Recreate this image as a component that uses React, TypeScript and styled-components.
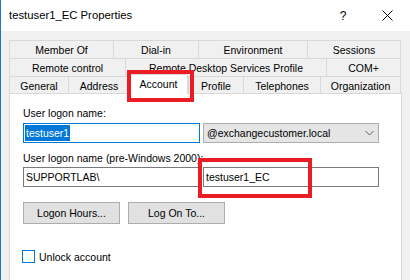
import styled, { createGlobalStyle } from "styled-components";

const GlobalStyle = createGlobalStyle`
  html, body {
    margin: 0;
    padding: 0;
    background: #ffffff;
  }
  * {
    box-sizing: border-box;
  }
`;

const Window = styled.div`
  position: relative;
  width: 410px;
  height: 280px;
  overflow: hidden;
  background: #f0f0f0;
  border-left: 1px solid #1979ca;
  font-family: "Liberation Sans", Arial, sans-serif;
  font-size: 10.5px;
  color: #000;
`;

const TitleBar = styled.div`
  display: flex;
  align-items: center;
  height: 31px;
  padding-left: 8px;
  padding-right: 13px;
  background: #ffffff;
`;

const Title = styled.div`
  flex: 1;
  font-size: 11.3px;
  padding-bottom: 1px;
`;

const TitleButton = styled.div<{ $mr?: number }>`
  width: 20px;
  margin-right: ${(p) => p.$mr ?? 0}px;
  display: flex;
  justify-content: center;
  align-items: center;
  font-size: 12px;
  color: #000;
`;

const Body = styled.div`
  padding: 9px 0 0 8px;
`;

const TabRow = styled.div<{ $h: number }>`
  display: flex;
  height: ${(p) => p.$h}px;
  margin-top: -1px;
  &:first-child {
    margin-top: 0;
  }
`;

const Tab = styled.div<{ $w: number; $last?: boolean; $front?: boolean; $selected?: boolean }>`
  width: ${(p) => p.$w + (p.$last ? 1 : 0)}px;
  display: flex;
  justify-content: center;
  align-items: center;
  border-top: 1px solid #d9d9d9;
  border-left: 1px solid #d9d9d9;
  border-right: ${(p) => (p.$last ? "1px solid #d9d9d9" : "none")};
  border-bottom: ${(p) => (p.$front ? "none" : "1px solid #d9d9d9")};
  background: ${(p) => (p.$selected ? "#ffffff" : "#f0f0f0")};
  white-space: nowrap;
  padding-top: 1px;
  ${(p) =>
    p.$selected &&
    `
    margin-top: -2px;
    height: calc(100% + 3px);
    position: relative;
    z-index: 1;
    border-right: 1px solid #d9d9d9;
    padding-bottom: 3px;
  `}
`;

const Panel = styled.div`
  width: 393px;
  height: 200px;
  background: #ffffff;
  border: 1px solid #d9d9d9;
  padding: 13px 0 0 13px;
  display: flex;
  flex-direction: column;
`;

const Label = styled.div<{ $mt?: number }>`
  line-height: 13px;
  height: 13px;
  margin-top: ${(p) => p.$mt ?? 0}px;
  white-space: nowrap;
`;

const FieldGrid = styled.div<{ $mt: number }>`
  display: grid;
  grid-template-columns: 177px 176px;
  column-gap: 3px;
  margin-top: ${(p) => p.$mt}px;
`;

const TextBox = styled.div<{ $focused?: boolean }>`
  height: 20px;
  border: 1px solid ${(p) => (p.$focused ? "#0078d7" : "#7a7a7a")};
  background: #ffffff;
  display: flex;
  align-items: center;
  padding-left: 1px;
  white-space: nowrap;
`;

const Selected = styled.span`
  background: #0078d7;
  color: #ffffff;
  line-height: 16px;
  padding: 0 1px;
`;

const Plain = styled.span`
  padding-left: 1px;
`;

const Combo = styled.div`
  height: 20px;
  border: 1px solid #adadad;
  background: #e5e5e5;
  display: flex;
  align-items: center;
  justify-content: space-between;
  padding: 0 4px 0 3px;
  white-space: nowrap;
`;

const ButtonRow = styled.div`
  display: flex;
  gap: 8px;
  margin-top: 15px;
`;

const Button = styled.div`
  width: 97px;
  height: 22px;
  background: #e1e1e1;
  border: 1px solid #adadad;
  display: flex;
  justify-content: center;
  align-items: center;
`;

const CheckRow = styled.div`
  display: flex;
  align-items: center;
  gap: 4px;
  margin-top: 26px;
  margin-left: -1px;
`;

const CheckBox = styled.div`
  width: 13px;
  height: 13px;
  border: 1px solid #0078d7;
  background: #ffffff;
`;

const Highlight = styled.div<{ $x: number; $y: number; $w: number; $h: number }>`
  position: absolute;
  left: ${(p) => p.$x}px;
  top: ${(p) => p.$y}px;
  width: ${(p) => p.$w}px;
  height: ${(p) => p.$h}px;
  border: 4px solid #ec1c24;
  pointer-events: none;
  z-index: 5;
`;

const rows = [
  { h: 19, tabs: [["Member Of", 104], ["Dial-in", 85], ["Environment", 109], ["Sessions", 93]] },
  { h: 19, tabs: [["Remote control", 116], ["Remote Desktop Services Profile", 201], ["COM+", 74]] },
  {
    h: 17,
    front: true,
    tabs: [["General", 59], ["Address", 61], ["Account", 59], ["Profile", 55], ["Telephones", 77], ["Organization", 80]],
  },
] as const;

export default function App() {
  return (
    <>
      <GlobalStyle />
      <Window>
        <TitleBar>
          <Title>testuser1_EC Properties</Title>
          <TitleButton $mr={24}>?</TitleButton>
          <TitleButton>
            <svg width="11" height="11" viewBox="0 0 11 11">
              <path d="M0.5 0.5 L10.5 10.5 M10.5 0.5 L0.5 10.5" stroke="#000" strokeWidth="1" />
            </svg>
          </TitleButton>
        </TitleBar>
        <Body>
          {rows.map((row, ri) => (
            <TabRow key={ri} $h={row.h}>
              {row.tabs.map(([name, w], ti) => (
                <Tab
                  key={name}
                  $w={w}
                  $last={ti === row.tabs.length - 1}
                  $front={"front" in row}
                  $selected={name === "Account"}
                >
                  {name}
                </Tab>
              ))}
            </TabRow>
          ))}
          <Panel>
            <Label>User logon name:</Label>
            <FieldGrid $mt={3}>
              <TextBox $focused>
                <Selected>testuser1</Selected>
              </TextBox>
              <Combo>
                <span>@exchangecustomer.local</span>
                <svg width="9" height="6" viewBox="0 0 9 6">
                  <path d="M0.5 1 L4.5 5 L8.5 1" fill="none" stroke="#606060" strokeWidth="1" />
                </svg>
              </Combo>
            </FieldGrid>
            <Label $mt={9}>User logon name (pre-Windows 2000):</Label>
            <FieldGrid $mt={2}>
              <TextBox>
                <Plain>SUPPORTLAB\</Plain>
              </TextBox>
              <TextBox>
                <Plain>testuser1_EC</Plain>
              </TextBox>
            </FieldGrid>
            <ButtonRow>
              <Button>Logon Hours...</Button>
              <Button>Log On To...</Button>
            </ButtonRow>
            <CheckRow>
              <CheckBox />
              <span>Unlock account</span>
            </CheckRow>
          </Panel>
        </Body>
        <Highlight $x={126} $y={70} $w={67} $h={32} />
        <Highlight $x={197} $y={158} $w={114} $h={40} />
      </Window>
    </>
  );
}
